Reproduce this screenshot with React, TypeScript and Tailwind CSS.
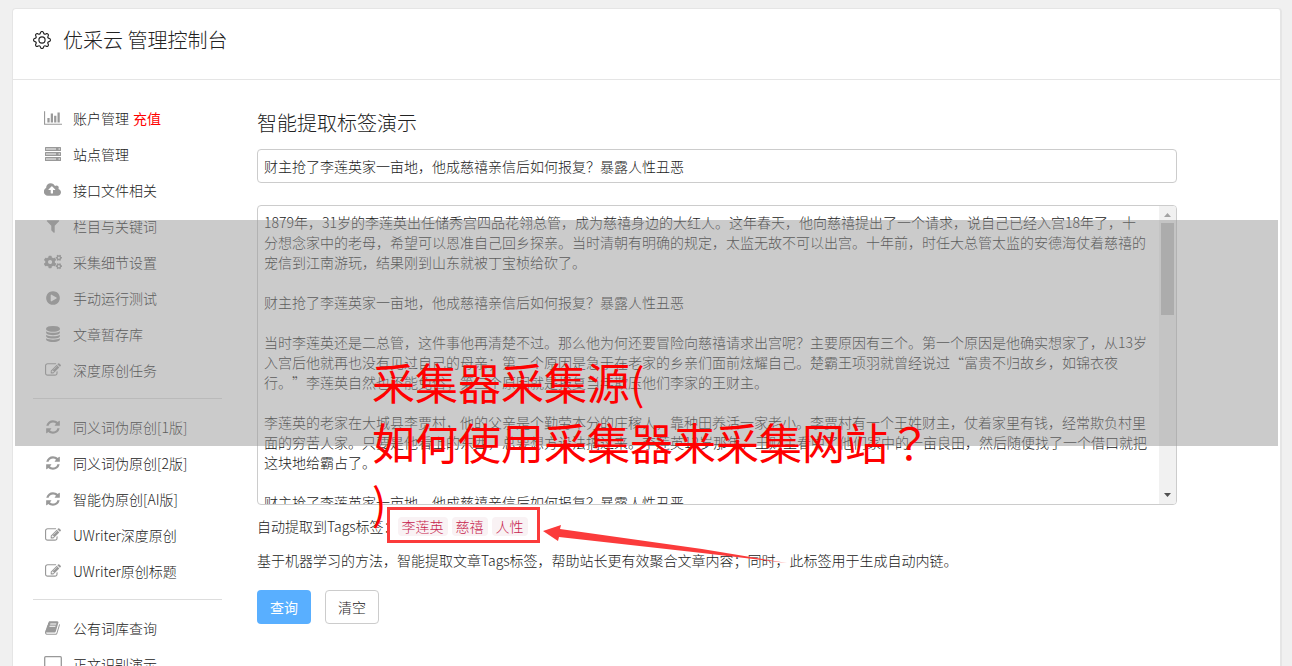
/**
 * Tag extraction demo page of the console.
 * Sidebar navigation, article form, extracted tags and callouts.
 */
import type { ReactNode } from "react";
import { BsGear } from "react-icons/bs";
import { FaCogs } from "react-icons/fa";

function Glyph({ d, width = 1792 }: { d: string; width?: number }) {
  return (
    <svg viewBox={`0 0 ${width} 1792`} className="h-4 w-[18px]" fill="currentColor" aria-hidden="true">
      <path d={d} />
    </svg>
  );
}

const refresh = (
  <Glyph d="M1639 1056q0 5-1 7-64 268-268 434.500t-478 166.500q-146 0-282.500-55t-243.500-157l-129 129q-19 19-45 19t-45-19-19-45v-448q0-26 19-45t45-19h448q26 0 45 19t19 45-19 45l-137 137q71 66 161 102t187 36q134 0 250-65t186-179q11-17 53-117 8-23 30-23h192q13 0 22.500 9.500t9.500 22.500zm25-800v448q0 26-19 45t-45 19h-448q-26 0-45-19t-19-45 19-45l138-138q-148-137-349-137-134 0-250 65t-186 179q-11 17-53 117-8 23-30 23h-199q-13 0-22.500-9.500t-9.500-22.500v-7q65-268 270-434.500t480-166.500q146 0 284 55.500t245 156.500l130-129q19-19 45-19t45 19 19 45z" />
);

const edit = (
  <Glyph d="M888 1184l116-116-152-152-116 116v56h96v96h56zm440-720q-16-16-33 1l-350 350q-17 17-1 33t33-1l350-350q17-17 1-33zm80 594v190q0 119-84.500 203.500t-203.500 84.500h-832q-119 0-203.500-84.500t-84.500-203.500v-832q0-119 84.500-203.500t203.500-84.500h832q63 0 117 25 15 7 18 23 3 17-9 29l-49 49q-14 14-32 8-23-6-45-6h-832q-66 0-113 47t-47 113v832q0 66 47 113t113 47h832q66 0 113-47t47-113v-126q0-13 9-22l64-64q15-15 35-7t20 29zm-96-738l288 288-672 672h-288v-288zm444 132l-92 92-288-288 92-92q28-28 68-28t68 28l152 152q28 28 28 68t-28 68z" />
);

const chart = (
  <Glyph
    width={2048}
    d="M640 896v512h-256v-512h256zm384-512v1024h-256v-1024h256zm1024 1152v128h-2048v-1536h128v1408h1920zm-640-896v768h-256v-768h256zm384-384v1152h-256v-1152h256z"
  />
);

const server = (
  <svg viewBox="0 0 18 16" className="h-4 w-[18px]" fill="none" aria-hidden="true">
    {[1, 6, 11].map((y) => (
      <g key={y}>
        <rect x="1" y={y} width="16" height="4" rx="0.5" fill="currentColor" />
        <path d={`M2 ${y + 2}h10M14.500 ${y + 2}h1.500`} stroke="#fff" strokeWidth="1.300" strokeOpacity="0.6" />
      </g>
    ))}
  </svg>
);

const upload = (
  <Glyph
    width={1920}
    d="M1216 864q0-14-9-23l-352-352q-9-9-23-9t-23 9l-351 351q-10 12-10 24 0 14 9 23t23 9h224v352q0 13 9.500 22.500t22.500 9.500h192q13 0 22.500-9.500t9.500-22.500v-352h224q13 0 22.500-9.500t9.500-22.500zm640 288q0 159-112.500 271.500t-271.500 112.500h-1088q-185 0-316.500-131.500t-131.500-316.500q0-130 70-240t188-165q-2-30-2-43 0-212 150-362t362-150q156 0 285.500 87t188.500 231q71-62 166-62 106 0 181 75t75 181q0 76-41 138 130 31 213.500 135.500t83.500 238.500z"
  />
);

const filter = (
  <Glyph d="M1595 295q17 41-14 70l-493 493v742q0 42-39 59-13 5-25 5-27 0-45-19l-256-256q-19-19-19-45v-486l-493-493q-31-29-14-70 17-39 59-39h1280q42 0 59 39z" />
);

const play = (
  <Glyph d="M896 128q209 0 385.500 103t279.500 279.500 103 385.500-103 385.500-279.500 279.500-385.500 103-385.500-103-279.500-279.500-103-385.500 103-385.500 279.500-279.500 385.500-103zm384 823q32-18 32-55t-32-55l-544-320q-31-19-64-1-32 19-32 56v640q0 37 32 56 16 8 32 8 17 0 32-9z" />
);

const database = (
  <Glyph d="M896 768q237 0 443-43t325-127v170q0 69-103 128t-280 93.500-385 34.500-385-34.500-280-93.500-103-128v-170q119 84 325 127t443 43zm0 768q237 0 443-43t325-127v170q0 69-103 128t-280 93.500-385 34.500-385-34.500-280-93.500-103-128v-170q119 84 325 127t443 43zm0-384q237 0 443-43t325-127v170q0 69-103 128t-280 93.500-385 34.500-385-34.500-280-93.500-103-128v-170q119 84 325 127t443 43zm0-1152q208 0 385 34.500t280 93.500 103 128v128q0 69-103 128t-280 93.500-385 34.500-385-34.500-280-93.500-103-128v-128q0-69 103-128t280-93.500 385-34.500z" />
);

const book = (
  <Glyph d="M1639 478q40 57 18 129l-275 906q-19 64-76.500 107.500t-122.500 43.500h-923q-77 0-148.500-53.500t-99.500-131.500q-24-67-2-127 0-4 3-27t4-37q1-8-3-21.500t-3-19.500q2-11 8-21t16.500-23.500 16.500-23.500q23-38 45-91.500t30-91.500q3-10 .5-30t-.5-28q3-11 17-28t17-23q21-36 42-92t25-90q1-9-2.500-32t.5-28q4-13 22-30.500t22-22.500q19-26 42.500-84.500t27.500-96.500q1-8-3-25.500t-2-26.500q2-8 9-18t18-23 17-21q8-12 16.500-30.500t15-35 16-36 19.500-32 26.500-23.500 36-11.500 47.500 5.500l-1 3q38-9 51-9h761q74 0 114 56t18 130l-274 906q-36 119-71.500 153.500t-128.500 34.500h-869q-27 0-38 15-11 16-1 43 24 70 144 70h923q29 0 56-15.500t35-41.500l300-987q7-22 5-57 38 15 59 43zm-1064 2q-4 13 2 22.500t20 9.500h608q13 0 25.500-9.500t16.500-22.500l21-64q4-13-2-22.500t-20-9.500h-608q-13 0-25.500 9.500t-16.500 22.500zm-83 256q-4 13 2 22.500t20 9.500h608q13 0 25.500-9.500t16.500-22.500l21-64q4-13-2-22.500t-20-9.500h-608q-13 0-25.500 9.500t-16.500 22.500z" />
);

const screen = (
  <svg viewBox="0 0 18 16" className="h-4 w-[18px]" fill="none" stroke="currentColor" aria-hidden="true">
    <rect x="0.700" y="0.700" width="16.600" height="12" rx="1" strokeWidth="1.300" />
    <path d="M5 15h8" strokeWidth="1.500" />
  </svg>
);

type Item = { label: string; icon: ReactNode; extra?: string };

const groups: Item[][] = [
  [
    { label: "账户管理", icon: chart, extra: "充值" },
    { label: "站点管理", icon: server },
    { label: "接口文件相关", icon: upload },
    { label: "栏目与关键词", icon: filter },
    { label: "采集细节设置", icon: <FaCogs className="size-[18px]" /> },
    { label: "手动运行测试", icon: play },
    { label: "文章暂存库", icon: database },
    { label: "深度原创任务", icon: edit },
  ],
  [
    { label: "同义词伪原创[1版]", icon: refresh },
    { label: "同义词伪原创[2版]", icon: refresh },
    { label: "智能伪原创[AI版]", icon: refresh },
    { label: "UWriter深度原创", icon: edit },
    { label: "UWriter原创标题", icon: edit },
  ],
  [
    { label: "公有词库查询", icon: book },
    { label: "正文识别演示", icon: screen },
  ],
];

const headline = "财主抢了李莲英家一亩地，他成慈禧亲信后如何报复？暴露人性丑恶";

const article = [
  "1879年，31岁的李莲英出任储秀宫四品花翎总管，成为慈禧身边的大红人。这年春天，他向慈禧提出了一个请求，说自己已经入宫18年了，十分想念家中的老母，希望可以恩准自己回乡探亲。当时清朝有明确的规定，太监无故不可以出宫。十年前，时任大总管太监的安德海仗着慈禧的宠信到江南游玩，结果刚到山东就被丁宝桢给砍了。",
  headline,
  "当时李莲英还是二总管，这件事他再清楚不过。那么他为何还要冒险向慈禧请求出宫呢？主要原因有三个。第一个原因是他确实想家了，从13岁入宫后他就再也没有见过自己的母亲；第二个原因是急于在老家的乡亲们面前炫耀自己。楚霸王项羽就曾经说过“富贵不归故乡，如锦衣夜行。”李莲英自然也不能免俗；第三个原因就是报复当年欺压他们李家的王财主。",
  "李莲英的老家在大城县李贾村，他的父亲是个勤劳本分的庄稼人，靠种田养活一家老小。李贾村有一个王姓财主，仗着家里有钱，经常欺负村里面的穷苦人家。只要是他看上的东西，总要想方设法搞过来。李莲英12岁那年，王财主看中了他们家中的一亩良田，然后随便找了一个借口就把这块地给霸占了。",
  headline,
].join("\n\n");

const tags = ["李莲英", "慈禧", "人性"];

function Sidebar() {
  return (
    <nav className="w-[189px] shrink-0">
      {groups.map((items, i) => (
        <ul key={i} className={i > 0 ? "mt-[10px] border-t border-[#ddd] pt-[10px]" : ""}>
          {items.map((item) => (
            <li key={item.label} className="flex h-9 items-center pb-px pl-[11px] text-sm">
              <a href="#" className="flex items-center gap-[11px] whitespace-nowrap text-[#222]">
                <span className="text-[#999]">{item.icon}</span>
                {item.label}
              </a>
              {item.extra && (
                <a href="#" className="ml-1 font-normal text-[#f00]">
                  {item.extra}
                </a>
              )}
            </li>
          ))}
        </ul>
      ))}
    </nav>
  );
}

function ScrollTrack() {
  return (
    <div className="flex w-[17px] shrink-0 flex-col items-center bg-[#f1f1f1] text-[#505050]" aria-hidden="true">
      <svg viewBox="0 0 17 17" className="size-[17px] text-[#a3a3a3]" fill="currentColor">
        <path d="M5 11l3.500-4 3.500 4z" />
      </svg>
      <div className="h-[92px] w-[13px] bg-[#c1c1c1]" />
      <svg viewBox="0 0 17 17" className="mt-auto size-[17px]" fill="currentColor">
        <path d="M5 6l3.500 4 3.500-4z" />
      </svg>
    </div>
  );
}

export default function App() {
  return (
    <div
      lang="zh-CN"
      className="relative h-screen overflow-hidden bg-[#f0f0f0] pt-2 pr-[10px] pl-3 font-['Noto_Sans_CJK_SC',sans-serif] text-sm font-light text-[#222] [text-spacing-trim:space-all]"
    >
      <div className="min-h-screen rounded-t border border-r-2 border-[#e5e5e5] bg-white">
        <header className="flex h-[71px] items-center gap-3 border-b border-[#e5e5e5] px-5 pb-2">
          <BsGear className="size-[18px]" />
          <h1 className="text-xl leading-7">优采云 管理控制台</h1>
        </header>

        <div className="flex gap-[35px] pt-5 pr-[103px] pl-5">
          <Sidebar />

          <main className="min-w-0 flex-1 pt-[9px]">
            <h2 className="text-xl leading-7">
              <label htmlFor="title">智能提取标签演示</label>
            </h2>
            <input
              id="title"
              type="text"
              defaultValue={headline}
              className="mt-3 block h-[34px] w-full rounded border border-[#ccc] bg-white px-[6px] outline-none"
            />
            <div className="mt-[22px] flex h-[300px] overflow-hidden rounded border border-[#ccc]">
              <textarea
                aria-label="文章内容"
                defaultValue={article}
                className="block min-w-0 flex-1 resize-none py-[6px] pr-[10px] pl-[6px] leading-5 outline-none [scrollbar-width:none]"
              />
              <ScrollTrack />
            </div>

            <div className="mt-[11px] flex h-5 items-center">
              <span>自动提取到Tags标签：</span>
              <div className="relative flex gap-1">
                {tags.map((tag) => (
                  <code
                    key={tag}
                    className="rounded bg-[#f9f2f4] px-1 font-['Noto_Sans_CJK_SC',sans-serif] text-sm leading-[19px] text-[#c7254e]"
                  >
                    {tag}
                  </code>
                ))}
                <div className="absolute -top-[10px] -right-3 -bottom-[7px] -left-[11px] border-3 border-[#fb3b3b]" />
                <svg
                  viewBox="0 0 246 40"
                  className="absolute top-[7px] left-full ml-[14px] h-10 w-[246px]"
                  fill="#fb3b3b"
                  aria-hidden="true"
                >
                  <path d="M1 7L19 1L18 5L160 25L245 39L160 29L17 13L16 17z" />
                </svg>
              </div>
            </div>
            <p className="mt-[14px] leading-5">
              基于机器学习的方法，智能提取文章Tags标签，帮助站长更有效聚合文章内容；同时，此标签用于生成自动内链。
            </p>
            <div className="mt-5 flex gap-[14px]">
              <button type="submit" className="h-[34px] w-[54px] rounded bg-[#59afff] font-normal text-white">
                查询
              </button>
              <button type="reset" className="h-[34px] w-[54px] rounded border border-[#ccc] bg-white">
                清空
              </button>
            </div>
          </main>
        </div>
      </div>

      {/* Caption band across the page */}
      <div className="absolute top-[220px] right-[14px] left-[15px] h-[226px] bg-[#979797]/50" />
      <p className="absolute top-[351px] left-[372px] text-[43px] leading-[60px] font-normal text-[#f00]">
        采集器采集源(
        <br />
        如何使用采集器来采集网站
        <span lang="ja" className="font-['Noto_Sans_CJK_JP',sans-serif]">
          ？
        </span>
        <br />)
      </p>
    </div>
  );
}
